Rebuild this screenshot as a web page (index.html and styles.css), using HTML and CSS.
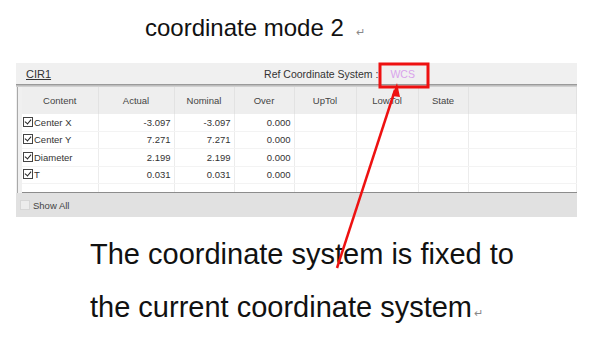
FILE: index.html
```html
<!DOCTYPE html>
<html>
<head>
<meta charset="utf-8">
<link rel="stylesheet" href="styles.css">
</head>
<body>
<div class="page">
  <h1 class="title">coordinate mode 2<span class="ret">↵</span></h1>
  <div class="panel">
    <div class="panel-head">
      <span class="cir">CIR1</span>
      <span class="ref">Ref Coordinate System :<span class="wcs">WCS</span></span>
    </div>
    <div class="rule"></div>
    <div class="grid-wrap">
      <table class="grid">
        <colgroup>
          <col class="c-content"><col class="c-actual"><col class="c-nominal"><col class="c-over"><col class="c-up"><col class="c-low"><col class="c-state"><col>
        </colgroup>
        <thead>
          <tr><th>Content</th><th>Actual</th><th>Nominal</th><th>Over</th><th>UpTol</th><th>LowTol</th><th>State</th><th></th></tr>
        </thead>
        <tbody>
          <tr><td class="name"><span class="cb on"></span>Center X</td><td>-3.097</td><td>-3.097</td><td>0.000</td><td></td><td></td><td></td><td></td></tr>
          <tr><td class="name"><span class="cb on"></span>Center Y</td><td>7.271</td><td>7.271</td><td>0.000</td><td></td><td></td><td></td><td></td></tr>
          <tr><td class="name"><span class="cb on"></span>Diameter</td><td>2.199</td><td>2.199</td><td>0.000</td><td></td><td></td><td></td><td></td></tr>
          <tr><td class="name"><span class="cb on"></span>T</td><td>0.031</td><td>0.031</td><td>0.000</td><td></td><td></td><td></td><td></td></tr>
          <tr class="filler"><td></td><td></td><td></td><td></td><td></td><td></td><td></td><td></td></tr>
        </tbody>
      </table>
    </div>
    <div class="panel-foot"><span class="cb"></span>Show All</div>
  </div>
  <p class="note">The coordinate system is fixed to<br>the current coordinate system<span class="ret small">↵</span></p>
  <svg class="annot" width="610" height="340" viewBox="0 0 610 340">
    <rect x="380" y="64" width="48" height="23" fill="none" stroke="#ee1111" stroke-width="3"/>
    <line x1="395" y1="90" x2="337" y2="268" stroke="#ee1111" stroke-width="2.5"/>
    <polygon points="397,83 392,96 400,97" fill="#ee1111"/>
  </svg>
</div>
</body>
</html>
```
FILE: styles.css
```css
html, body {
  margin: 0;
  padding: 0;
  background: #ffffff;
}
.page {
  position: relative;
  width: 610px;
  height: 340px;
  overflow: hidden;
  font-family: "Liberation Sans", Arial, sans-serif;
}
.title {
  margin: 0;
  padding: 10px 0 0 145px;
  height: 55px;
  box-sizing: border-box;
  font-family: "Liberation Sans", Arial, sans-serif;
  font-weight: normal;
  font-size: 24px;
  line-height: 36px;
  color: #111;
}
.ret {
  font-size: 11px;
  color: #888;
  margin-left: 12px;
}
.panel {
  margin: 8px 0 0 16px;
  width: 561px;
  background: #f0f0f0;
  color: #333;
}
.panel-head {
  height: 21px;
  display: flex;
  align-items: center;
  font-size: 10.5px;
  padding-left: 10px;
}
.cir {
  text-decoration: underline;
  color: #333;
  font-size: 11px;
}
.ref {
  margin-left: 213px;
  color: #333;
}
.wcs {
  color: #d9a3ec;
  margin-left: 12px;
}
.rule {
  height: 1px;
  border-top: 1px solid #9a9a9a;
  border-bottom: 1px solid #d0d0d0;
  background: #bdbdbd;
}
.grid-wrap {
  margin-left: 1px;
  border-left: 1px solid #a9a9a9;
  padding-left: 4px;
  background: #f0f0f0;
}
.grid {
  width: 100%;
  border-collapse: collapse;
  table-layout: fixed;
  font-size: 9.5px;
  background: #fff;
}
.c-content { width: 76px; }
.c-actual { width: 76px; }
.c-nominal { width: 60px; }
.c-over { width: 60px; }
.c-up { width: 62px; }
.c-low { width: 62px; }
.c-state { width: 50px; }
.grid th {
  height: 27px;
  background: #eeeeee;
  font-weight: normal;
  color: #444;
  border-right: 1px solid #e2e2e2;
  padding: 0;
  text-align: center;
}
.grid td {
  height: 16.5px;
  padding: 0 3px 0 0;
  text-align: right;
  color: #333;
  border-right: 1px solid #ececec;
  border-bottom: 1px solid #f3f3f3;
  white-space: nowrap;
}
.grid td.name {
  text-align: left;
  padding-left: 1px;
}
.grid tr.filler td {
  height: 8px;
  border-bottom: 1px solid #8c8c8c;
}
.cb {
  display: inline-block;
  width: 8px;
  height: 8px;
  border: 1px solid #444;
  background: #fff;
  vertical-align: -1px;
  margin-right: 1px;
  position: relative;
}
.cb.on::after {
  content: "";
  position: absolute;
  left: 2px;
  top: 0px;
  width: 3px;
  height: 5px;
  border-right: 1.5px solid #222;
  border-bottom: 1.5px solid #222;
  transform: rotate(40deg);
}
.panel-foot {
  height: 24px;
  background: #e1e1e1;
  display: flex;
  align-items: center;
  font-size: 9.5px;
  padding-left: 4px;
  color: #444;
}
.panel-foot .cb {
  border-color: #d6d6d6;
  background: #ececec;
  margin-right: 3px;
}
.note {
  margin: 11px 0 0 90px;
  font-family: "Liberation Sans", Arial, sans-serif;
  font-size: 29px;
  line-height: 53px;
  color: #111;
}
.ret.small {
  margin-left: 2px;
  font-size: 11px;
}
.annot {
  position: absolute;
  left: 0;
  top: 0;
}
```
